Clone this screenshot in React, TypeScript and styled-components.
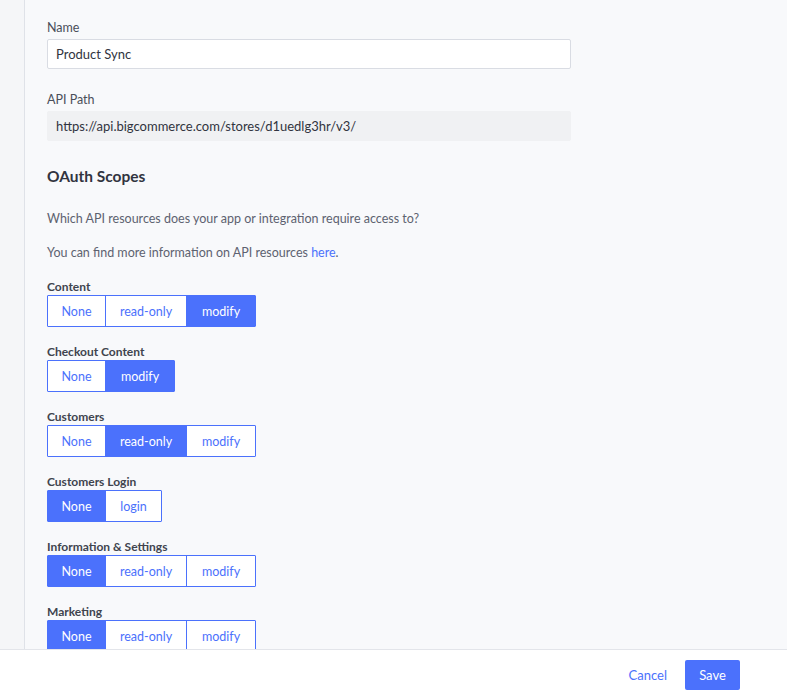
import React from "react";
import styled, { createGlobalStyle } from "styled-components";

const G = createGlobalStyle`
  body { margin: 0; font-family: Lato, "Open Sans", sans-serif; background: #f8f9fb; }
`;
const Page = styled.div`display: flex; flex-direction: column; height: 699px; width: 787px;`;
const Main = styled.div`display: flex; height: 649px; overflow: hidden;`;
const Side = styled.div`width: 24px; background: #f5f6f8; border-right: 1px solid #dfe2e8;`;
const Content = styled.div`padding: 20px 0 0 22px; width: 524px;`;
const Label = styled.div`font-size: 12.5px; color: #4a4f5a; margin-bottom: 4px;`;
const Input = styled.div<{ $ro?: boolean }>`
  height: 30px; box-sizing: border-box; display: flex; align-items: center; padding: 0 8px;
  font-size: 13px; color: #313440;
  background: ${p => (p.$ro ? "#f0f1f3" : "#fff")};
  border: 1px solid ${p => (p.$ro ? "#f0f1f3" : "#d9dce3")}; border-radius: 2px;
  margin-bottom: 23px;
`;
const H = styled.h2`font-size: 15.5px; font-weight: 700; color: #313440; margin: 26px 0 26px;`;
const P = styled.p`font-size: 12.5px; color: #5d6270; margin: 0 0 19px;`;
const A = styled.span`color: #4b71fc;`;
const Scope = styled.div`margin-bottom: 17px;`;
const SLabel = styled.div`font-size: 12px; font-weight: 700; color: #40444e; height: 16px; margin-top: 2px;`;
const Group = styled.div`display: inline-flex; border: 1px solid #4b71fc; border-radius: 1px; background: #fff;`;
const Btn = styled.div<{ $on?: boolean; $w: number }>`
  width: ${p => p.$w}px; height: 30px; display: flex; align-items: center; justify-content: center;
  font-size: 12.5px; color: ${p => (p.$on ? "#fff" : "#4b71fc")};
  background: ${p => (p.$on ? "#4b71fc" : "#fff")};
  & + & { border-left: 1px solid #4b71fc; }
`;
const Footer = styled.div`flex: 1; background: #fff; border-top: 1px solid #e3e5ea; display: flex; justify-content: flex-end; align-items: center; padding-right: 47px; gap: 10px;`;
const Cancel = styled.div`color: #4b71fc; font-size: 13px; padding: 0 8px;`;
const Save = styled.div`background: #4b71fc; color: #fff; font-size: 13px; width: 55px; height: 30px; display: flex; align-items: center; justify-content: center; border-radius: 2px;`;

const W: Record<string, number> = { None: 58, "read-only": 81, modify: 69, login: 56 };
const scopes: [string, string[], string][] = [
  ["Content", ["None", "read-only", "modify"], "modify"],
  ["Checkout Content", ["None", "modify"], "modify"],
  ["Customers", ["None", "read-only", "modify"], "read-only"],
  ["Customers Login", ["None", "login"], "None"],
  ["Information & Settings", ["None", "read-only", "modify"], "None"],
  ["Marketing", ["None", "read-only", "modify"], "None"],
];

export default function App() {
  return (
    <Page>
      <G />
      <Main>
        <Side />
        <Content>
          <Label>Name</Label>
          <Input>Product Sync</Input>
          <Label>API Path</Label>
          <Input $ro>https://api.bigcommerce.com/stores/d1uedlg3hr/v3/</Input>
          <H>OAuth Scopes</H>
          <P>Which API resources does your app or integration require access to?</P>
          <P>You can find more information on API resources <A>here</A>.</P>
          {scopes.map(([n, opts, sel]) => (
            <Scope key={n}>
              <SLabel>{n}</SLabel>
              <Group>
                {opts.map(o => (
                  <Btn key={o} $w={W[o] - 1} $on={o === sel}>{o}</Btn>
                ))}
              </Group>
            </Scope>
          ))}
        </Content>
      </Main>
      <Footer>
        <Cancel>Cancel</Cancel>
        <Save>Save</Save>
      </Footer>
    </Page>
  );
}
